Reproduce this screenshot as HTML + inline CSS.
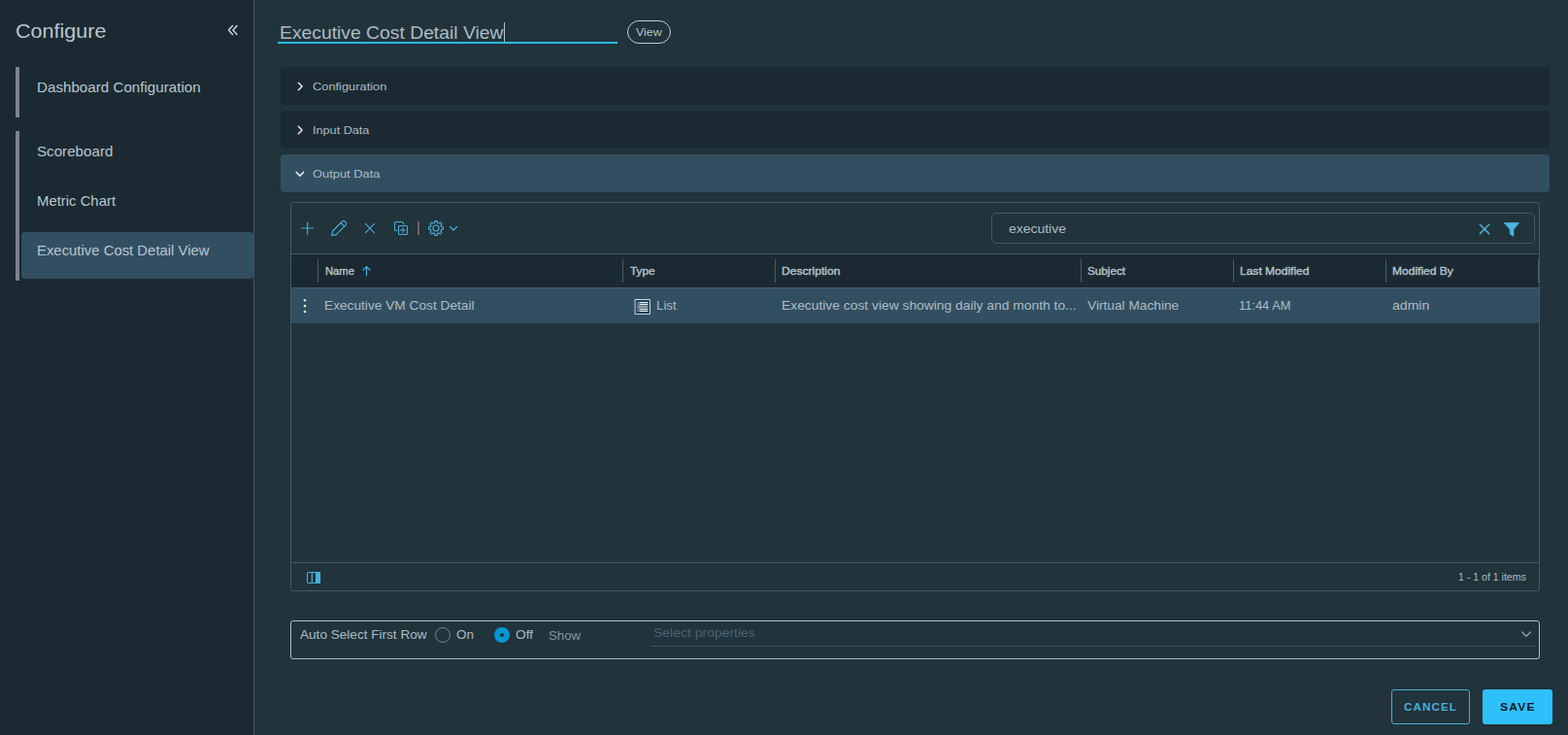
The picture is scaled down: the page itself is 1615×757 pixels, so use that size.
<!DOCTYPE html>
<html lang="en">
<head>
<meta charset="utf-8">
<title>Configure</title>
<style>
*{box-sizing:border-box;margin:0;padding:0}
html,body{width:1615px;height:757px;overflow:hidden;background:#21333b;font-family:"Liberation Sans",sans-serif;color:#adbbc4}
.a{position:absolute}
.t{position:absolute;white-space:nowrap;line-height:1;transform-origin:0 0}
#side{position:absolute;left:0;top:0;width:262px;height:757px;background:#1b2a32;border-right:1px solid #46545f}
.bar{position:absolute;left:16px;width:4px;background:#7d828c}
.sel{position:absolute;left:22px;top:239px;width:239px;height:48px;background:#324f61;border-radius:4px}
.acc{position:absolute;left:289px;width:1307px;height:39px;background:#1b2a32;border-radius:4px}
.grid{position:absolute;left:299px;top:208px;width:1287px;height:401px;border:1px solid #485764;border-radius:3px}
.hdr{position:absolute;left:300px;top:261px;width:1285px;height:35px;background:#1b2a32;border-top:1px solid #485764}
.sep{position:absolute;top:267px;width:1px;height:24px;background:#465b69}
.row{position:absolute;left:300px;top:296px;width:1285px;height:37px;background:#324f61;border-top:1px solid #4a5b68}
.foot{position:absolute;left:300px;top:579px;width:1285px;height:1px;background:#485764}
.search{position:absolute;left:1021px;top:219px;width:560px;height:32px;border:1px solid #485764;border-radius:5px}
.opt{position:absolute;left:299px;top:639px;width:1287px;height:40px;border:1px solid #b3bec5;border-radius:3px}
.btn{position:absolute;top:710px;height:36px;border-radius:3px}
svg{position:absolute;left:0;top:0;overflow:visible}
</style>
</head>
<body>
<div id="side">
  <div class="bar" style="top:69px;height:52px"></div>
  <div class="bar" style="top:135px;height:154px"></div>
  <div class="sel"></div>
</div>

<!-- title underline, caret, badge -->
<div class="a" style="left:519px;top:23px;width:1px;height:20px;background:#b9c4cb"></div>
<div class="a" style="left:286px;top:43px;width:350px;height:2px;background:#29bcf7"></div>
<div class="a" style="left:646px;top:21px;width:45px;height:24px;border:1px solid #c3ced5;border-radius:12px"></div>

<!-- accordion -->
<div class="acc" style="top:69px"></div>
<div class="acc" style="top:114px"></div>
<div class="acc" style="top:159px;background:#324f61"></div>

<!-- datagrid -->
<div class="grid"></div>
<div class="search"></div>
<div class="hdr"></div>
<div class="sep" style="left:327px"></div>
<div class="sep" style="left:641px"></div>
<div class="sep" style="left:798px"></div>
<div class="sep" style="left:1113px"></div>
<div class="sep" style="left:1270px"></div>
<div class="sep" style="left:1427px"></div>
<div class="sep" style="left:1584px"></div>
<div class="row"></div>
<div class="foot"></div>

<!-- options -->
<div class="opt"></div>
<div class="a" style="left:448px;top:646px;width:16px;height:16px;border:1px solid #74838d;border-radius:50%"></div>
<div class="a" style="left:509px;top:646px;width:16px;height:16px;border-radius:50%;background:#0095d3"></div>
<div class="a" style="left:515px;top:652px;width:4px;height:4px;border-radius:50%;background:#21333b"></div>
<div class="a" style="left:670px;top:665px;width:911px;height:1px;background:#3b5262"></div>

<!-- buttons -->
<div class="btn" style="left:1433px;width:81px;border:1px solid #49afd9"></div>
<div class="btn" style="left:1527px;width:72px;background:#2ec0fc"></div>

<!-- all icons, page coordinates -->
<svg width="1615" height="757" viewBox="0 0 1615 757" fill="none" stroke-linecap="round" stroke-linejoin="round">
  <!-- collapse -->
  <g stroke="#c8d3da" stroke-width="1.5"><path d="M239.5 26.5 L235.5 31 L239.5 35.5"/><path d="M244 26.5 L240 31 L244 35.5"/></g>
  <!-- accordion chevrons -->
  <g stroke="#e3e8eb" stroke-width="1.5">
    <path d="M307.4 85.2 L311.1 89 L307.4 92.8"/>
    <path d="M307.4 130.2 L311.1 134 L307.4 137.8"/>
    <path d="M305.2 177.4 L308.9 181.1 L312.6 177.4"/>
  </g>
  <!-- toolbar -->
  <g stroke="#49afd9" stroke-width="1.2">
    <path d="M316.7 229 V241 M310.7 235 H322.7"/>
    <path d="M341.7 242.4 L342.6 238.0 L352.6 228.0 Q353.9 226.9 355.1 228.0 L356.2 229.1 Q357.3 230.3 356.2 231.6 L346.2 241.6 Z M351.2 229.6 L354.6 233.0" stroke-width="1.1"/>
    <path d="M376.3 230.4 L385.7 239.8 M385.7 230.4 L376.3 239.8" stroke-width="1.1"/>
    <path d="M408.5 237.5 H407.8 Q406.5 237.5 406.5 236.2 V229.8 Q406.5 228.5 407.8 228.5 H414.2 Q415.5 228.5 415.5 229.8 V230.5" stroke-width="1.1"/>
    <rect x="410.5" y="232.5" width="9" height="9" rx="1.3" stroke-width="1.1"/>
    <path d="M415 234.3 V239.7 M412.3 237 H417.7" stroke-width="1.8" stroke-linecap="butt" stroke-opacity="0.65"/>
    <path d="M431 228 V242" stroke="#696564" stroke-width="2" stroke-linecap="butt"/>
    <circle cx="449" cy="235" r="3" stroke-width="1.1"/>
    <path transform="translate(309,227)" d="M138.62 2.47 L138.83 0.59 L141.17 0.59 L141.38 2.47 L142.94 3.11 L144.41 1.93 L146.07 3.59 L144.89 5.06 L145.53 6.62 L147.41 6.83 L147.41 9.17 L145.53 9.38 L144.89 10.94 L146.07 12.41 L144.41 14.07 L142.94 12.89 L141.38 13.53 L141.17 15.41 L138.83 15.41 L138.62 13.53 L137.06 12.89 L135.59 14.07 L133.93 12.41 L135.11 10.94 L134.47 9.38 L132.59 9.17 L132.59 6.83 L134.47 6.62 L135.11 5.06 L133.93 3.59 L135.59 1.93 L137.06 3.11 Z" stroke-width="1.1"/>
    <path d="M463.6 233.6 L467.1 237.1 L470.6 233.6" stroke="#33bfff" stroke-width="1.3"/>
  </g>
  <!-- search icons -->
  <path d="M1524.3 231.2 L1533.7 240.6 M1533.7 231.2 L1524.3 240.6" stroke="#49afd9" stroke-width="1.5"/>
  <path d="M1549.4 229.6 H1564.6 L1558.9 236.2 V243.3 L1555.2 240.9 V236.2 Z" fill="#4bb4e1" stroke="#4bb4e1" stroke-width="0.8"/>
  <!-- sort arrow -->
  <path d="M377.5 283.6 V274.8 M373.9 278.2 L377.5 274.6 L381.1 278.2" stroke="#3bb8f0" stroke-width="1.2"/>
  <!-- row dots -->
  <g fill="#dfe6ea" stroke="none"><circle cx="314" cy="309.3" r="1.3"/><circle cx="314" cy="315.1" r="1.3"/><circle cx="314" cy="321" r="1.3"/></g>
  <!-- list icon -->
  <g stroke="none">
    <rect x="654.5" y="308.5" width="15" height="15" fill="#25435a" stroke="#c8d3da" stroke-width="1"/>
    <rect x="656" y="311" width="11.3" height="10" fill="#c8d3da" fill-opacity="0.32"/>
    <rect x="658.6" y="311" width="8.7" height="1" fill="#e6ecef"/>
    <rect x="658.6" y="313" width="8.7" height="1" fill="#e6ecef"/>
    <rect x="657" y="315" width="10.3" height="2" fill="#c8d3da" fill-opacity="0.45"/>
    <rect x="658.6" y="318" width="8.7" height="1" fill="#e6ecef"/>
    <rect x="658.6" y="320" width="8.7" height="1" fill="#e6ecef"/>
  </g>
  <!-- footer column toggle -->
  <g stroke="#49afd9" stroke-width="1.1"><rect x="316.5" y="589.5" width="13" height="11" rx="1.2"/><path d="M321.4 589.5 V600.5" stroke-width="1.2"/><rect x="325.6" y="589.5" width="3.9" height="11" rx="0.6" fill="#49afd9"/></g>
  <!-- select chevron -->
  <path d="M1567.7 651 L1572 655.3 L1576.3 651" stroke="#9aa3a9" stroke-width="1.3"/>
</svg>

<div class="t" id="configure" style="left:15.83px;top:22.37px;font-size:20px;color:#b9c6ce;transform:scaleX(1.0773)">Configure</div>
<div class="t" id="nav1" style="left:37.91px;top:81.60px;font-size:15px;color:#b9c6ce;transform:scaleX(1.0115)">Dashboard Configuration</div>
<div class="t" id="nav2" style="left:37.66px;top:147.90px;font-size:15px;color:#b9c6ce;transform:scaleX(1.0107)">Scoreboard</div>
<div class="t" id="nav3" style="left:37.95px;top:198.50px;font-size:15px;color:#b9c6ce;transform:scaleX(0.9918)">Metric Chart</div>
<div class="t" id="nav4" style="left:38.01px;top:249.60px;font-size:15px;color:#b9c6ce;transform:scaleX(0.9919)">Executive Cost Detail View</div>
<div class="t" id="title" style="left:288.00px;top:25.24px;font-size:18.5px;color:#adbbc4;transform:scaleX(1.0440)">Executive Cost Detail View</div>
<div class="t" id="view" style="left:655.30px;top:27.79px;font-size:11px;color:#b9c6ce;transform:scaleX(1.1300)">View</div>
<div class="t" id="acc1" style="left:322.16px;top:84.47px;font-size:11.5px;color:#adbbc4;transform:scaleX(1.1164)">Configuration</div>
<div class="t" id="acc2" style="left:321.77px;top:129.47px;font-size:11.5px;color:#adbbc4;transform:scaleX(1.1004)">Input Data</div>
<div class="t" id="acc3" style="left:321.93px;top:174.47px;font-size:11.5px;color:#adbbc4;transform:scaleX(1.1211)">Output Data</div>
<div class="t" id="search" style="left:1038.59px;top:228.80px;font-size:13px;color:#adbbc4;transform:scaleX(1.0731)">executive</div>
<div class="t" id="h_name" style="left:334.94px;top:274.49px;font-size:11px;color:#b4c1c9;-webkit-text-stroke:0.4px #b4c1c9;transform:scaleX(1.0189)">Name</div>
<div class="t" id="h_type" style="left:648.69px;top:274.49px;font-size:11px;color:#b4c1c9;-webkit-text-stroke:0.4px #b4c1c9;transform:scaleX(1.0702)">Type</div>
<div class="t" id="h_desc" style="left:805.05px;top:274.49px;font-size:11px;color:#b4c1c9;-webkit-text-stroke:0.4px #b4c1c9;transform:scaleX(1.0974)">Description</div>
<div class="t" id="h_subj" style="left:1119.71px;top:274.49px;font-size:11px;color:#b4c1c9;-webkit-text-stroke:0.4px #b4c1c9;transform:scaleX(1.0665)">Subject</div>
<div class="t" id="h_last" style="left:1276.56px;top:274.49px;font-size:11px;color:#b4c1c9;-webkit-text-stroke:0.4px #b4c1c9;transform:scaleX(1.0927)">Last Modified</div>
<div class="t" id="h_mod" style="left:1433.55px;top:274.49px;font-size:11px;color:#b4c1c9;-webkit-text-stroke:0.4px #b4c1c9;transform:scaleX(1.0943)">Modified By</div>
<div class="t" id="r_name" style="left:333.64px;top:308.00px;font-size:13px;color:#adbbc4;transform:scaleX(1.0536)">Executive VM Cost Detail</div>
<div class="t" id="r_list" style="left:675.75px;top:308.00px;font-size:13px;color:#adbbc4;transform:scaleX(1.0223)">List</div>
<div class="t" id="r_desc" style="left:804.86px;top:308.00px;font-size:13px;color:#adbbc4;transform:scaleX(1.0637)">Executive cost view showing daily and month to...</div>
<div class="t" id="r_subj" style="left:1120.01px;top:308.00px;font-size:13px;color:#adbbc4;transform:scaleX(1.0547)">Virtual Machine</div>
<div class="t" id="r_time" style="left:1276.20px;top:308.00px;font-size:13px;color:#adbbc4;transform:scaleX(0.9903)">11:44 AM</div>
<div class="t" id="r_admin" style="left:1433.97px;top:308.00px;font-size:13px;color:#adbbc4;transform:scaleX(1.0812)">admin</div>
<div class="t" id="foot" style="left:1501.80px;top:589.49px;font-size:11px;color:#adbbc4;transform:scaleX(0.9590)">1 - 1 of 1 items</div>
<div class="t" id="o_auto" style="left:309.18px;top:647.30px;font-size:13px;color:#adbbc4;transform:scaleX(1.0447)">Auto Select First Row</div>
<div class="t" id="o_on" style="left:469.65px;top:647.30px;font-size:13px;color:#adbbc4;transform:scaleX(1.0269)">On</div>
<div class="t" id="o_off" style="left:530.80px;top:647.30px;font-size:13px;color:#adbbc4;transform:scaleX(1.0573)">Off</div>
<div class="t" id="o_show" style="left:564.55px;top:648.10px;font-size:13px;color:#8496a1;transform:scaleX(1.0184)">Show</div>
<div class="t" id="o_sel" style="left:672.58px;top:644.80px;font-size:13px;color:#4c626e;transform:scaleX(1.0749)">Select properties</div>
<div class="t" id="b_cancel" style="left:1445.72px;top:722.69px;font-size:11px;color:#49afd9;font-weight:bold;letter-spacing:1.000px;transform:scaleX(1.0592)">CANCEL</div>
<div class="t" id="b_save" style="left:1544.97px;top:722.69px;font-size:11px;color:#0b1a21;font-weight:bold;letter-spacing:1.100px;transform:scaleX(1.0947)">SAVE</div>
</body>
</html>
